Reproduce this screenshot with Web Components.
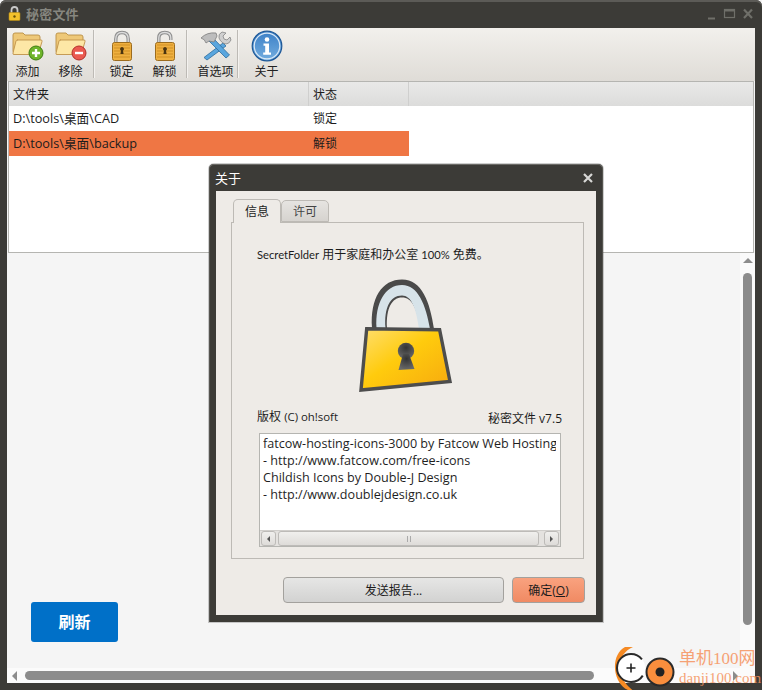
<!DOCTYPE html>
<html lang="zh">
<head>
<meta charset="utf-8">
<title>秘密文件</title>
<style>
  html, body { margin: 0; padding: 0; background: #f4f4f4; }
  body {
    width: 762px; height: 690px; position: relative; overflow: hidden;
    font: 12px "Open Sans", "Noto Sans CJK SC", sans-serif; color: #1c1c1c;
  }
</style>
</head>
<body>
<app-window heading="秘密文件">
  <tool-bar>
    <tool-button label="添加" icon="add" style="width:43px;padding-right:2px"></tool-button>
    <tool-button label="移除" icon="remove" style="width:43px;padding-right:2px"></tool-button>
    <tool-sep style="margin-right:6px"></tool-sep>
    <tool-button label="锁定" icon="lock" style="width:43px"></tool-button>
    <tool-button label="解锁" icon="unlock" style="width:43px"></tool-button>
    <tool-sep></tool-sep>
    <tool-button label="首选项" icon="tools" style="width:50px;padding-left:7px"></tool-button>
    <tool-sep></tool-sep>
    <tool-button label="关于" icon="info" style="width:57px"></tool-button>
  </tool-bar>
  <folder-list></folder-list>
  <main-panel></main-panel>
</app-window>
<about-dialog></about-dialog>
<water-mark></water-mark>

<script>
const ICONS = {
  folder: `
    <path d="M2 5 q0-2 2-2 h8 l2 2 h13 q2 0 2 2 v15 q0 1-1 1 h-24 q-2 0-2-2 z" fill="#eec878" stroke="#b98f45" stroke-width=".9"/>
    <path d="M6 10 h24 q1.500 0 1 1.500 l-3.500 12 q-.4 1-1.500 1 h-23 q-1.500 0-1-1.500 l3-12 q.4-1 1.500-1 z" fill="#fde7a6" stroke="#c0924a" stroke-width=".9"/>`,
  body: `
    <rect x="4.500" y="12.500" width="19" height="18" rx="2" fill="#efb040" stroke="#9c6c1e"/>
    <path d="M6 15 h16 M6 18 h16 M6 21 h16 M6 24 h16 M6 27 h16" stroke="#cf8f24" stroke-width="1"/>
    <path d="M14 17 a2 2 0 0 1 1 3.700 l.6 3.300 h-3.200 l.6-3.300 a2 2 0 0 1 1-3.700 z" fill="#4a3410"/>`
};

const TOOL_ICONS = {
  add: `<svg width="34" height="32" viewBox="0 0 34 32">${ICONS.folder}
      <circle cx="25" cy="23" r="7" fill="#6fb42a" stroke="#3f7d12"/>
      <path d="M25 19 v8 M21 23 h8" stroke="#fff" stroke-width="2.400"/></svg>`,
  remove: `<svg width="34" height="32" viewBox="0 0 34 32">${ICONS.folder}
      <circle cx="25" cy="23" r="7" fill="#ea5a50" stroke="#b3302a"/>
      <path d="M21 23 h8" stroke="#fff" stroke-width="2.400"/></svg>`,
  lock: `<svg width="28" height="32" viewBox="0 0 28 32">
      <path d="M7.800 13 v-4 q0-6.500 6.200-6.500 t6.200 6.500 v4" fill="none" stroke="#8e8e8e" stroke-width="3.400"/>
      <path d="M7.800 13 v-4 q0-6.500 6.200-6.500 t6.200 6.500 v4" fill="none" stroke="#dcdcdc" stroke-width="1.300"/>
      ${ICONS.body}</svg>`,
  unlock: `<svg width="28" height="32" viewBox="0 0 28 32">
      <path d="M7.800 13 v-5 q0-5.500 6-5.500 t6 5.500 v2" fill="none" stroke="#8e8e8e" stroke-width="3.400"/>
      <path d="M7.800 13 v-5 q0-5.500 6-5.500 t6 5.500 v2" fill="none" stroke="#dcdcdc" stroke-width="1.300"/>
      ${ICONS.body}</svg>`,
  tools: `<svg width="34" height="32" viewBox="0 0 34 32">
      <path d="M24 13 L5 27.500 L8 30 L27 16 z" fill="#5aa6de" stroke="#2f6c9c" stroke-width=".8"/>
      <path d="M23 2 q-4 2-3 6 q1 3 4 5 l3 1 q3 0 5-4 l-1-3 l-3 3 l-3-1 l-1-3 l3-3 z" fill="#cfcfcf" stroke="#858585" stroke-width=".8"/>
      <path d="M10 11 L27 28 L30.500 25 L14 8 z" fill="#5aa6de" stroke="#2f6c9c" stroke-width=".8"/>
      <path d="M2 8 q6-6 15-5 l1 3 l-3 6 l-5-1 l-3 2 q-1-4-5-5 z" fill="#bdbdbd" stroke="#7e7e7e" stroke-width=".8"/></svg>`,
  info: `<svg width="32" height="32" viewBox="0 0 32 32">
      <defs><linearGradient id="g" x1="0" y1="0" x2="0" y2="1"><stop offset="0" stop-color="#3b7fc6"/><stop offset="1" stop-color="#74aee0"/></linearGradient></defs>
      <circle cx="16" cy="16" r="14.800" fill="url(#g)" stroke="#1d5796" stroke-width="1.200"/>
      <circle cx="16" cy="16" r="12.800" fill="none" stroke="#dbe9f6" stroke-width="1.200"/>
      <circle cx="16" cy="9.500" r="2.300" fill="#fff"/>
      <path d="M12.500 13.500 h5.500 v9 h2 v2.200 h-7.800 v-2.200 h2 v-6.800 h-1.700 z" fill="#fff"/></svg>`
};

class AppWindow extends HTMLElement {
  constructor() {
    super();
    this.attachShadow({ mode: 'open' });
  }

  connectedCallback() {
    this.shadowRoot.innerHTML = `
      <style>
        :host {
          display: flex; flex-direction: column; box-sizing: border-box;
          width: 762px; height: 690px; padding: 0 7px 7px;
          background: #3c3b37; border-radius: 6px 6px 0 0;
          box-shadow: inset 0 2px 0 #5c5b57;
        }
        .bar { flex: 0 0 28px; box-sizing: border-box; padding-bottom: 1px; display: flex; align-items: center; gap: 5px; margin-left: 1px; }
        .title { font-size: 13px; font-weight: 700; color: #86867f; letter-spacing: .2px; }
        .ctrl { margin-left: auto; margin-right: -2px; display: block; }
        .body { flex: 1; min-height: 0; display: flex; flex-direction: column; background: #f5f5f5; }
      </style>
      <div class="bar">
        <svg width="13" height="15" viewBox="0 0 13 15">
          <path d="M3.500 7 v-3 q0-3 3-3 t3 3 v3" fill="none" stroke="#c8c8c8" stroke-width="1.800"/>
          <rect x="1" y="6.500" width="11" height="8" rx="1" fill="#f3c12b" stroke="#b68a14" stroke-width=".6"/>
          <circle cx="6.500" cy="10.500" r="1.200" fill="#6b5208"/>
        </svg>
        <span class="title">${this.getAttribute('heading')}</span>
        <svg class="ctrl" width="50" height="12" viewBox="0 0 50 12" fill="none" stroke="#6f6f69">
          <path d="M1 10.500 h7" stroke-width="2"/>
          <rect x="17.500" y="1.500" width="10" height="8" stroke-width="1.200"/>
          <path d="M17.500 2.500 h10" stroke-width="2"/>
          <path d="M37 1.500 l8 8.500 M45 1.500 l-8 8.500" stroke-width="2.200"/>
        </svg>
      </div>
      <div class="body"><slot></slot></div>
    `;
  }
}

class ToolBar extends HTMLElement {
  constructor() {
    super();
    this.attachShadow({ mode: 'open' });
  }

  connectedCallback() {
    this.shadowRoot.innerHTML = `
      <style>
        :host {
          display: flex; flex: 0 0 53px; box-sizing: border-box; padding-top: 2px;
          background: linear-gradient(#f2f0ec, #dfdcd7);
        }
      </style>
      <slot></slot>
    `;
  }
}

class ToolSep extends HTMLElement {
  constructor() {
    super();
    this.attachShadow({ mode: 'open' });
  }

  connectedCallback() {
    this.shadowRoot.innerHTML = `
      <style>
        :host { display: block; width: 1px; height: 48px; background: #bdbab5; box-shadow: 1px 0 0 #f4f2ef; }
      </style>
    `;
  }
}

class ToolButton extends HTMLElement {
  constructor() {
    super();
    this.attachShadow({ mode: 'open' });
  }

  connectedCallback() {
    this.shadowRoot.innerHTML = `
      <style>
        :host { display: flex; flex-direction: column; align-items: center; box-sizing: border-box; }
        .icon { height: 32px; display: flex; justify-content: center; }
        .label { font: 12px/16px "Noto Sans CJK SC", sans-serif; margin-top: 1px; color: #222; white-space: nowrap; }
      </style>
      <div class="icon">${TOOL_ICONS[this.getAttribute('icon')]}</div>
      <div class="label">${this.getAttribute('label')}</div>
    `;
  }
}

class FolderList extends HTMLElement {
  constructor() {
    super();
    this.attachShadow({ mode: 'open' });
    this.rows = [
      { path: 'D:\\tools\\桌面\\CAD', state: '锁定' },
      { path: 'D:\\tools\\桌面\\backup', state: '解锁', active: true }
    ];
  }

  connectedCallback() {
    this.shadowRoot.innerHTML = `
      <style>
        :host {
          display: block; flex: 0 0 172px; box-sizing: border-box; margin: 0 1px;
          border: 1px solid #b5b5b1; background: #fff; font: 12px "Open Sans", "Noto Sans CJK SC", sans-serif;
        }
        .head, .row { display: grid; grid-template-columns: 300px 100px; align-items: center; }
        .head { height: 24px; background: linear-gradient(#e9e9e8, #dcdcdb); }
        .head div { height: 100%; display: flex; align-items: center; padding-left: 4px; box-sizing: border-box; border-right: 1px solid #cfcfce; }
        .row { height: 25px; width: 400px; }
        .row div { padding: 0 0 2px 4px; white-space: nowrap; }
        .row .path { font-size: 12.7px; }
        .row.active { background: #ef7644; }
      </style>
      <div class="head"><div>文件夹</div><div>状态</div></div>
      ${this.rows.map(row => `
        <div class="row ${row.active ? 'active' : ''}">
          <div class="path">${row.path}</div>
          <div>${row.state}</div>
        </div>
      `).join('')}
    `;
  }
}

class MainPanel extends HTMLElement {
  constructor() {
    super();
    this.attachShadow({ mode: 'open' });
  }

  connectedCallback() {
    this.shadowRoot.innerHTML = `
      <style>
        :host { display: grid; flex: 1; min-height: 0; grid-template-columns: 1fr 15px; grid-template-rows: 1fr 15px; background: #f5f5f5; }
        .content { padding: 349px 0 0 24px; }
        button {
          display: block; width: 87px; height: 40px; border: 0; border-radius: 3px; padding: 0 0 2px;
          background: #0070c8; color: #fff; font: 700 16px "Noto Sans CJK SC", sans-serif;
        }
        .v { background: #fafafa; position: relative; }
        .h { grid-column: 1 / 3; background: #fbfbfb; position: relative; }
        .thumb { position: absolute; background: #8c8c8c; border-radius: 5px; }
        .v .thumb { left: 3px; top: 20px; width: 9px; height: 352px; }
        .h .thumb { left: 18px; top: 3px; height: 9px; width: 569px; }
        .arrow { position: absolute; width: 0; height: 0; border: 5px solid transparent; }
        .up { left: 3px; top: 5px; border-top: 0; border-bottom-color: #8c8c8c; }
        .left { left: 5px; top: 3px; border-left: 0; border-right-color: #8c8c8c; }
        .right { right: 17px; top: 3px; border-right: 0; border-left-color: #8c8c8c; }
      </style>
      <div class="content"><button>刷新</button></div>
      <div class="v"><i class="arrow up"></i><i class="thumb"></i></div>
      <div class="h"><i class="arrow left"></i><i class="thumb"></i><i class="arrow right"></i></div>
    `;
  }
}

class AboutDialog extends HTMLElement {
  constructor() {
    super();
    this.attachShadow({ mode: 'open' });
  }

  connectedCallback() {
    this.shadowRoot.innerHTML = `
      <style>
        :host {
          position: absolute; left: 209px; top: 164px; width: 394px; height: 458px;
          display: flex; flex-direction: column; box-sizing: border-box; padding: 0 7px 7px;
          background: #3c3b37; border-radius: 5px 5px 0 0;
          box-shadow: inset 0 1px 0 #6b6a66, inset 1px 0 0 #55544f, inset -1px 0 0 #55544f, 0 0 0 1px rgba(60,60,60,.25);
          font: 12px "Open Sans", "Noto Sans CJK SC", sans-serif; color: #1c1c1c;
        }
        .bar { flex: 0 0 27px; display: flex; align-items: center; justify-content: space-between; color: #fff; font-size: 13px; }
        .bar span { margin-left: -1px; }
        .bar svg { margin-right: 2px; }
        .inner { flex: 1; min-height: 0; background: #eeebe7; padding: 8px 12px 0 15px; }
        .tabs { display: flex; height: 23px; padding-left: 2px; align-items: flex-end; position: relative; z-index: 1; }
        .tab {
          display: flex; align-items: center; justify-content: center; box-sizing: border-box;
          border: 1px solid #bdbab5; border-radius: 5px 5px 0 0;
        }
        .tab.on { width: 48px; height: 24px; padding-bottom: 2px; background: #eeebe7; border-bottom: 0; margin-bottom: -1px; }
        .tab.off { width: 48px; height: 22px; background: linear-gradient(#e6e4e1, #d6d3cf); color: #444; }
        .pane {
          height: 337px; box-sizing: border-box; border: 1px solid #bdbab5;
          padding: 25px 21px 0 25px; display: flex; flex-direction: column;
        }
        .line { line-height: 14px; white-space: nowrap; font-family: Lato, "Noto Sans CJK SC", sans-serif; }
        .line em { font-style: normal; font-size: 11.2px; }
        .pane svg.big { display: block; margin: 8px 0 0 83px; }
        .meta { display: flex; justify-content: space-between; align-items: flex-end; height: 15px; margin-top: 15px; }
        .meta span:last-child { position: relative; top: 2px; }
        .meta em { font-style: normal; font-size: 11.4px; }
        .box {
          margin: 8px 0 0 2px; width: 302px; height: 114px; box-sizing: border-box; flex: none;
          background: #fff; border: 1px solid #b5b5b1; display: flex; flex-direction: column;
        }
        .text {
          flex: 1; min-height: 0; overflow: hidden; margin: 0 4px 0 3px; padding-top: 1px;
          font-size: 12.6px; line-height: 17px; white-space: nowrap; color: #1f1f1f;
        }
        .sb { height: 16px; display: flex; gap: 2px; background: #e4e2df; border-top: 1px solid #d0cecb; padding: 0 1px; box-sizing: border-box; }
        .sb div { box-sizing: border-box; border: 1px solid #bdbbb8; border-radius: 3px; background: linear-gradient(#f0efed, #dedcd9); display: flex; align-items: center; justify-content: center; }
        .sb .btn { width: 15px; flex: none; }
        .sb .track { flex: 1; margin-right: 3px; }
        .tri { width: 0; height: 0; border: 3.500px solid transparent; }
        .tl { border-left: 0; border-right-color: #555; }
        .tr { border-right: 0; border-left-color: #555; }
        .grip { width: 4px; height: 6px; border-left: 1px solid #aaa; border-right: 1px solid #aaa; box-sizing: border-box; }
        .buttons { display: flex; justify-content: flex-end; gap: 8px; margin: 18px -1px 0 0; }
        button {
          height: 26px; box-sizing: border-box; border: 1px solid #a3a19d; border-radius: 4px; padding: 0;
          font: 12px "Open Sans", "Noto Sans CJK SC", sans-serif; color: #1c1c1c;
        }
        .send { width: 221px; background: linear-gradient(#e6e6e5, #d2d2d1); }
        .ok { width: 73px; background: linear-gradient(#f9a27f, #f08a63); }
        u { text-underline-offset: 1px; }
      </style>
      <div class="bar">
        <span>关于</span>
        <svg width="12" height="12" viewBox="0 0 12 12"><path d="M2 2 l8 8 M10 2 l-8 8" stroke="#d8d8d6" stroke-width="2.200"/></svg>
      </div>
      <div class="inner">
        <div class="tabs">
          <div class="tab on">信息</div>
          <div class="tab off">许可</div>
        </div>
        <div class="pane">
          <div class="line"><em>SecretFolder</em> 用于家庭和办公室 <em>100%</em> 免费。</div>
          <svg class="big" width="130" height="125" viewBox="0 0 130 125">
            <defs>
              <linearGradient id="gold" x1="0" y1="0" x2="1" y2="1">
                <stop offset="0" stop-color="#ffdf70"/><stop offset=".45" stop-color="#ffcb0d"/><stop offset="1" stop-color="#f6a90f"/>
              </linearGradient>
              <radialGradient id="hole" cx=".5" cy=".3" r=".7">
                <stop offset="0" stop-color="#333"/><stop offset="1" stop-color="#6a6a6a"/>
              </radialGradient>
            </defs>
            <path d="M32 58 C30 28 42 9.500 62 9.500 C82 9.500 90 32 94 59 L80 59 C77 38 72 27.500 62 27.500 C52 27.500 46 38 47 58 z" fill="#4a4a4a"/>
            <path d="M36.500 58 C35 33 45 15 62 15 C78 15 86 35 90 59 L79 59 C76 37 71 25.500 62 25.500 C50 25.500 44 38 45.500 58 z" fill="#d7e3e9"/>
            <path d="M26.700 58.700 L99.600 59.700 L110 111.500 L21 120 z" fill="url(#gold)" stroke="#4d4d4d" stroke-width="3.400" stroke-linejoin="miter"/>
            <circle cx="66" cy="81" r="8.200" fill="url(#hole)"/>
            <path d="M63 84 L58.500 100 L74.500 99 L69 84 z" fill="url(#hole)"/>
          </svg>
          <div class="meta"><span>版权 <em>(C) oh!soft</em></span><span>秘密文件 v7.5</span></div>
          <div class="box">
            <div class="text">
              fatcow-hosting-icons-3000 by Fatcow Web Hosting<br>
              - http://www.fatcow.com/free-icons<br>
              Childish Icons by Double-J Design<br>
              - http://www.doublejdesign.co.uk
            </div>
            <div class="sb">
              <div class="btn"><i class="tri tl"></i></div>
              <div class="track"><i class="grip"></i></div>
              <div class="btn"><i class="tri tr"></i></div>
            </div>
          </div>
        </div>
        <div class="buttons">
          <button class="send">发送报告...</button>
          <button class="ok">确定(<u>O</u>)</button>
        </div>
      </div>
    `;
  }
}

class WaterMark extends HTMLElement {
  constructor() {
    super();
    this.attachShadow({ mode: 'open' });
  }

  connectedCallback() {
    this.shadowRoot.innerHTML = `
      <style>
        :host { position: absolute; right: 0; bottom: 0; width: 148px; height: 54px; display: flex; align-items: flex-end; }
        svg { display: block; flex: none; }
        .txt { margin-left: 1px; color: #f5935e; font-family: "Liberation Serif", "Noto Sans CJK SC", serif; opacity: .85; }
        .a { font-size: 17px; line-height: 20px; white-space: nowrap; }
        .b { font-size: 15px; line-height: 19px; white-space: nowrap; margin-bottom: 2px; }
      </style>
      <svg width="64" height="54" viewBox="0 0 64 54">
        <g transform="translate(0 8)">
          <path d="M11 3 C1 8 -2 24 4 36 C8 44 14 47 21 48 C14 43 7 36 6 25 C5 15 10 7 19 3 z" fill="#f58a24"/>
          <circle cx="17" cy="24" r="14" fill="#fff" stroke="#2a2a2a" stroke-width="2" stroke-dasharray="70 18" stroke-dashoffset="-8"/>
          <path d="M17 19.500 v9 M12.500 24 h9" stroke="#222" stroke-width="1.600"/>
          <circle cx="46" cy="28" r="13.500" fill="#f98e3d" stroke="#2a2a2a" stroke-width="2"/>
          <circle cx="46" cy="28" r="4.500" fill="#222"/>
        </g>
      </svg>
      <div class="txt">
        <div class="a">单机100网</div>
        <div class="b">danji100.com</div>
      </div>
    `;
  }
}

customElements.define('app-window', AppWindow);
customElements.define('tool-bar', ToolBar);
customElements.define('tool-sep', ToolSep);
customElements.define('tool-button', ToolButton);
customElements.define('folder-list', FolderList);
customElements.define('main-panel', MainPanel);
customElements.define('about-dialog', AboutDialog);
customElements.define('water-mark', WaterMark);
</script>
</body>
</html>
